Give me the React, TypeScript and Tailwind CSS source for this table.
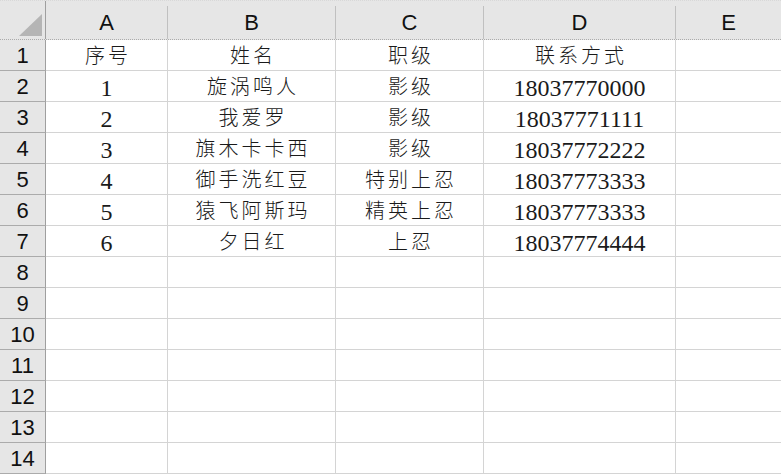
import React from "react";

const cols = [
  { key: "A", w: "w-[122px]" },
  { key: "B", w: "w-[168px]" },
  { key: "C", w: "w-[148px]" },
  { key: "D", w: "w-[192px]" },
  { key: "E", w: "flex-1" },
];

const data: string[][] = [
  ["序号", "姓名", "职级", "联系方式", ""],
  ["1", "旋涡鸣人", "影级", "18037770000", ""],
  ["2", "我爱罗", "影级", "18037771111", ""],
  ["3", "旗木卡卡西", "影级", "18037772222", ""],
  ["4", "御手洗红豆", "特别上忍", "18037773333", ""],
  ["5", "猿飞阿斯玛", "精英上忍", "18037773333", ""],
  ["6", "夕日红", "上忍", "18037774444", ""],
];

const isAscii = (s: string) => /^[0-9]+$/.test(s);

export default function App() {
  const rows = Array.from({ length: 14 }, (_, i) => data[i] ?? ["", "", "", "", ""]);
  return (
    <div className="w-[781px] h-[475px] overflow-hidden bg-white select-none">
      {/* Header */}
      <div className="flex h-[40px] bg-[#e6e6e6] border-b border-[#ababab] border-t border-t-[#d8d8d8] border-dotted">
        <div className="w-[46px] h-full border-r border-solid border-[#9f9f9f] relative shrink-0">
          <svg className="absolute left-[19px] top-[13px]" width="24" height="23" viewBox="0 0 24 23">
            <polygon points="0,22 23,22 23,0" fill="#b5b5b5" />
          </svg>
        </div>
        {cols.map((c) => (
          <div key={c.key} className={`${c.w} shrink-0 h-full flex flex-col`}>
            <div className="h-[8px]" />
            <div
              className={`flex-1 flex items-center justify-center text-[22px] text-[#111] ${c.key !== "E" ? "border-r border-solid border-[#c0c0c0]" : ""}`}
              style={{ fontFamily: "'Liberation Sans', Arial, sans-serif" }}
            >
              {c.key}
            </div>
          </div>
        ))}
      </div>
      {rows.map((r, ri) => (
        <div key={ri} className="flex h-[31px] border-b border-[#d4d4d4]">
          <div
            className="w-[46px] shrink-0 bg-[#e6e6e6] border-r border-[#9f9f9f] border-b border-b-[#ababab] -mb-px h-[31px] flex items-center justify-center text-[22px] text-[#111]"
            style={{ fontFamily: "'Liberation Sans', Arial, sans-serif" }}
          >
            {ri + 1}
          </div>
          {cols.map((c, ci) => {
            const v = r[ci];
            const num = isAscii(v);
            return (
              <div
                key={c.key}
                className={`${c.w} shrink-0 h-full flex items-center justify-center ${ci < 4 ? "border-r border-[#d4d4d4]" : ""} text-[#1a1a1a] whitespace-nowrap`}
              >
                {num ? (
                  <span className="text-[24px] leading-none pt-[3px]" style={{ fontFamily: "'Liberation Serif', 'Times New Roman', serif" }}>
                    {v}
                  </span>
                ) : (
                  <span
                    className="text-[20px] leading-none tracking-[3px] pl-[3px] font-light"
                    style={{ fontFamily: "'Noto Sans CJK SC', 'Noto Sans', sans-serif" }}
                  >
                    {v}
                  </span>
                )}
              </div>
            );
          })}
        </div>
      ))}
    </div>
  );
}
